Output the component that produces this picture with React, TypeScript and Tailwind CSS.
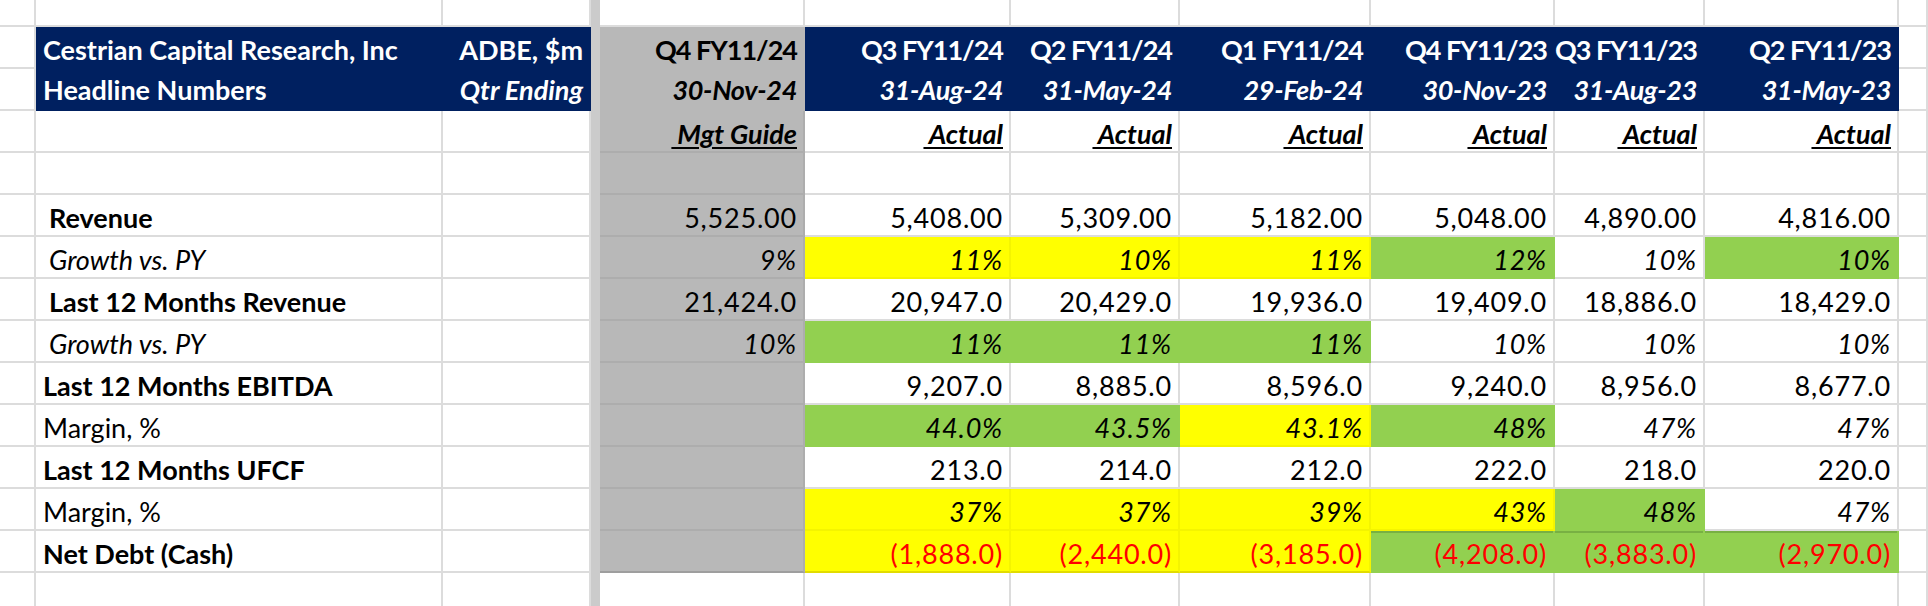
import React from 'react'

type Fill = 'none' | 'yellow' | 'green' | 'grey' | 'navy'

const COLS = 'grid grid-cols-[36px_407px_148px_9px_205px_206px_169px_191px_184px_150px_194px_1fr]'

const fillCls: Record<Fill, string> = {
  none: 'bg-white border-[#dcdcdc]',
  yellow: 'bg-[#ffff00] border-[#f4f400]',
  green: 'bg-[#92d050] border-[#92d050]',
  grey: 'bg-[#b8b8b8] border-[#adadad]',
  navy: 'bg-[#002060] border-[#002060]',
}

interface CellProps {
  fill?: Fill
  left?: boolean
  className?: string
  children?: React.ReactNode
}

function Cell({ fill = 'none', left, className = '', children }: CellProps) {
  return (
    <div
      className={`flex items-end overflow-visible whitespace-pre border-r-2 border-b-2 pb-[4px] leading-none ${
        left ? 'justify-start pl-[7px]' : 'justify-end pr-[6px]'
      } ${fillCls[fill]} ${className}`}
    >
      {children}
    </div>
  )
}

const Divider = () => <div className="bg-[#cbcbcb]" />

const quarters = [
  { q: 'Q3 FY11/24', d: '31-Aug-24' },
  { q: 'Q2 FY11/24', d: '31-May-24' },
  { q: 'Q1 FY11/24', d: '29-Feb-24' },
  { q: 'Q4 FY11/23', d: '30-Nov-23' },
  { q: 'Q3 FY11/23', d: '31-Aug-23' },
  { q: 'Q2 FY11/23', d: '31-May-23' },
]

interface BodyRow {
  label: string
  kind: 'bold' | 'italic' | 'plain'
  indent?: boolean
  italicVals?: boolean
  red?: boolean
  guide: string
  vals: string[]
  fills: Fill[]
}

const N: Fill = 'none'
const Y: Fill = 'yellow'
const G: Fill = 'green'

const body: BodyRow[] = [
  { label: 'Revenue', kind: 'bold', indent: true, guide: '5,525.00', vals: ['5,408.00', '5,309.00', '5,182.00', '5,048.00', '4,890.00', '4,816.00'], fills: [N, N, N, N, N, N] },
  { label: 'Growth vs. PY', kind: 'italic', indent: true, italicVals: true, guide: '9%', vals: ['11%', '10%', '11%', '12%', '10%', '10%'], fills: [Y, Y, Y, G, N, G] },
  { label: 'Last 12 Months Revenue', kind: 'bold', indent: true, guide: '21,424.0', vals: ['20,947.0', '20,429.0', '19,936.0', '19,409.0', '18,886.0', '18,429.0'], fills: [N, N, N, N, N, N] },
  { label: 'Growth vs. PY', kind: 'italic', indent: true, italicVals: true, guide: '10%', vals: ['11%', '11%', '11%', '10%', '10%', '10%'], fills: [G, G, G, N, N, N] },
  { label: 'Last 12 Months EBITDA', kind: 'bold', guide: '', vals: ['9,207.0', '8,885.0', '8,596.0', '9,240.0', '8,956.0', '8,677.0'], fills: [N, N, N, N, N, N] },
  { label: 'Margin, %', kind: 'plain', italicVals: true, guide: '', vals: ['44.0%', '43.5%', '43.1%', '48%', '47%', '47%'], fills: [G, G, Y, G, N, N] },
  { label: 'Last 12 Months UFCF', kind: 'bold', guide: '', vals: ['213.0', '214.0', '212.0', '222.0', '218.0', '220.0'], fills: [N, N, N, N, N, N] },
  { label: 'Margin, %', kind: 'plain', italicVals: true, guide: '', vals: ['37%', '37%', '39%', '43%', '48%', '47%'], fills: [Y, Y, Y, Y, G, N] },
  { label: 'Net Debt (Cash)', kind: 'bold', red: true, guide: '', vals: ['(1,888.0)', '(2,440.0)', '(3,185.0)', '(4,208.0)', '(3,883.0)', '(2,970.0)'], fills: [Y, Y, Y, G, G, G] },
]

export default function App() {
  return (
    <div className="h-[606px] w-[1928px] overflow-hidden bg-white font-['Lato',sans-serif] text-[27px] text-black">
      {/* blank top row */}
      <div className={`${COLS} h-[27px]`}>
        <Cell />
        <Cell />
        <Cell className="border-r-0" />
        <Divider />
        <Cell />
        {quarters.map((q) => (
          <Cell key={q.q} />
        ))}
        <Cell />
      </div>

      {/* navy header rows */}
      <div className={`${COLS} h-[42px]`}>
        <Cell />
        <Cell fill="navy" left className="font-bold text-white">Cestrian Capital Research, Inc</Cell>
        <Cell fill="navy" className="font-bold text-white">ADBE, $m</Cell>
        <Divider />
        <Cell fill="grey" className="border-[#b8b8b8] font-bold tracking-[-1px]">Q4 FY11/24</Cell>
        {quarters.map((q) => (
          <Cell key={q.q} fill="navy" className="font-bold tracking-[-1px] text-white">{q.q}</Cell>
        ))}
        <Cell />
      </div>
      <div className={`${COLS} h-[42px]`}>
        <Cell />
        <Cell fill="navy" left className="pb-[6px] font-bold text-white">Headline Numbers</Cell>
        <Cell fill="navy" className="pb-[6px] font-bold italic text-white">Qtr Ending</Cell>
        <Divider />
        <Cell fill="grey" className="border-[#b8b8b8] pb-[6px] font-bold italic tracking-[-0.3px]">30-Nov-24</Cell>
        {quarters.map((q) => (
          <Cell key={q.d} fill="navy" className="pb-[6px] font-bold italic tracking-[-0.3px] text-white">{q.d}</Cell>
        ))}
        <Cell />
      </div>

      {/* guide / actual row */}
      <div className={`${COLS} h-[42px]`}>
        <Cell />
        <Cell />
        <Cell className="border-r-0" />
        <Divider />
        <Cell fill="grey" className="border-[#a5a5a5] font-bold italic">
          <span className="underline decoration-2 underline-offset-[3px]"> Mgt Guide</span>
        </Cell>
        {quarters.map((q) => (
          <Cell key={q.q} className="font-bold italic">
            <span className="underline decoration-2 underline-offset-[3px]"> Actual</span>
          </Cell>
        ))}
        <Cell />
      </div>

      {/* empty spacer row */}
      <div className={`${COLS} h-[42px]`}>
        <Cell />
        <Cell />
        <Cell className="border-r-0" />
        <Divider />
        <Cell fill="grey" className="border-[#a5a5a5]" />
        {quarters.map((q) => (
          <Cell key={q.q} />
        ))}
        <Cell />
      </div>

      {body.map((r, i) => {
        const last = i === body.length - 1
        return (
          <div key={i} className={`${COLS} h-[42px]`}>
            <Cell />
            <Cell
              left
              className={`${r.indent ? 'pl-[13px]' : ''} ${r.kind === 'bold' ? 'font-bold' : ''} ${
                r.kind === 'italic' ? 'italic' : ''
              }`}
            >
              {r.label}
            </Cell>
            <Cell className="border-r-0" />
            <Divider />
            <Cell
              fill="grey"
              className={`tracking-[0.8px] ${last ? 'border-b-[#9e9e9e]' : ''} ${r.italicVals ? 'italic' : ''}`}
            >
              {r.guide}
            </Cell>
            {r.vals.map((v, j) => {
              const f = r.fills[j]
              let extra = ''
              if (last && f === 'green') extra = 'border-[#78b043] shadow-[inset_0_2px_0_#78b043]'
              if (last && f === 'yellow') extra = 'border-b-[#e2dc00]'
              return (
                <Cell
                  key={j}
                  fill={f}
                  className={`tracking-[0.8px] ${extra} ${r.italicVals ? 'italic' : ''} ${r.red ? 'text-[#ff0000]' : ''}`}
                >
                  {v}
                </Cell>
              )
            })}
            <Cell />
          </div>
        )
      })}

      {/* trailing blank row */}
      <div className={`${COLS} h-[42px]`}>
        <Cell />
        <Cell />
        <Cell className="border-r-0" />
        <Divider />
        <Cell />
        {quarters.map((q) => (
          <Cell key={q.q} />
        ))}
        <Cell />
      </div>
    </div>
  )
}
